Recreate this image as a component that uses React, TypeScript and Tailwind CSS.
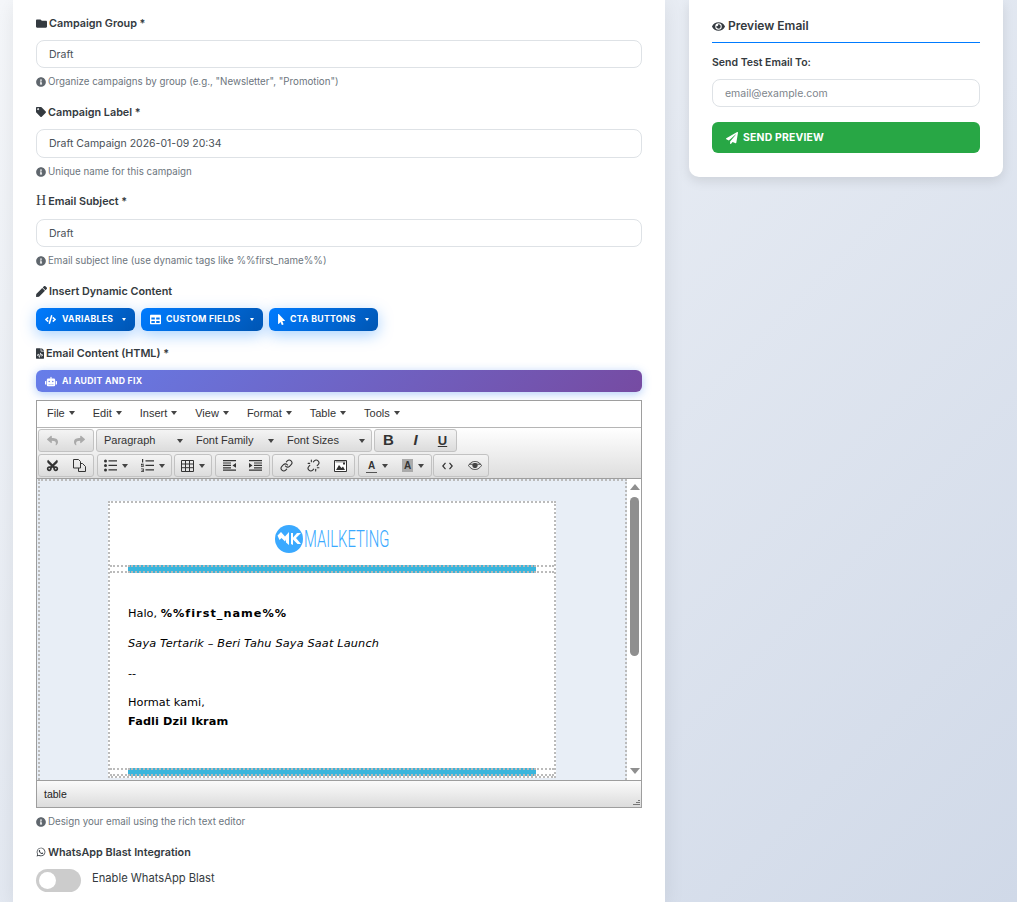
import type { ReactNode } from "react";
import {
  FaCode,
  FaCut,
  FaEye,
  FaFileCode,
  FaFolder,
  FaInfoCircle,
  FaMousePointer,
  FaPaperPlane,
  FaPen,
  FaReply,
  FaRobot,
  FaShare,
  FaTable,
  FaTag,
  FaWhatsapp,
} from "react-icons/fa";
import { Link, Unlink } from "lucide-react";

function Label({ icon, children }: { icon: ReactNode; children: ReactNode }) {
  return (
    <div className="flex h-[14px] items-center gap-[2px] text-[10.8px] leading-[14px] font-semibold text-[#343a40]">
      {icon}
      <span className="pt-[2px]">{children}</span>
    </div>
  );
}

function Help({ children }: { children: ReactNode }) {
  return (
    <div className="flex h-[14px] items-center gap-[2px] text-[9.75px] leading-[14px] text-[#6c757d]">
      <FaInfoCircle className="h-[10px] w-[10px] text-[#5f666d]" />
      <span>{children}</span>
    </div>
  );
}

function TextInput({ value, h }: { value: string; h: string }) {
  return (
    <div className={`flex items-center rounded-lg border border-[#dee2e6] bg-white px-3 pt-[1px] text-[10.5px] text-[#495057] ${h}`}>
      {value}
    </div>
  );
}

function DropButton({ icon, label, w, gap }: { icon: ReactNode; label: string; w: string; gap: string }) {
  return (
    <div className={`flex h-[23px] items-center rounded-md bg-[linear-gradient(135deg,#007bff,#0056b3)] pl-[9px] text-[8.7px] font-bold tracking-[0.3px] text-white shadow-[0_4px_15px_rgba(0,123,255,0.35)] ${w}`}>
      {icon}
      <span className={`flex-1 pt-[1px] ${gap}`}>{label}</span>
      <span className="mr-[9px] h-0 w-0 border-x-[2.5px] border-t-[3px] border-x-transparent border-t-white" />
    </div>
  );
}

function Caret({ className = "" }: { className?: string }) {
  return <span className={`inline-block h-0 w-0 border-x-[3.5px] border-t-[4px] border-x-transparent border-t-[#444] ${className}`} />;
}

function MenuItem({ label }: { label: string }) {
  return (
    <span className="flex items-center gap-[4px]">
      {label}
      <Caret />
    </span>
  );
}

function Group({ w, children, className = "" }: { w: string; children: ReactNode; className?: string }) {
  return (
    <div className={`flex h-[23px] items-center rounded-[3px] border border-[#c2c2c2] bg-[linear-gradient(#f4f4f4,#dcdcdc)] text-[#333] ${w} ${className}`}>
      {children}
    </div>
  );
}

function Tool({ w, children }: { w: string; children: ReactNode }) {
  return <span className={`flex items-center justify-center gap-[5px] ${w}`}>{children}</span>;
}

function SelectBox({ label, w }: { label: string; w: string }) {
  return (
    <span className={`flex items-center justify-between pl-[7px] pr-[6px] text-[11px] ${w}`}>
      {label}
      <Caret />
    </span>
  );
}

// tinymce toolbar icons, the react-icons ones are too heavy at this size
function Bullets() {
  return (
    <svg width="13" height="13" viewBox="0 0 13 13" fill="#333">
      <circle cx="1.5" cy="2" r="1.5" />
      <circle cx="1.5" cy="6.5" r="1.5" />
      <circle cx="1.5" cy="11" r="1.5" />
      <path d="M4.5 1.3h8.5v1.3H4.5zM4.5 5.8h8.5v1.3H4.5zM4.5 10.3h8.5v1.3H4.5z" />
    </svg>
  );
}

function Numbers() {
  return (
    <svg width="13" height="13" viewBox="0 0 13 13" fill="#333">
      <path d="M1 0h1.2v3.6H1zM0 4.8h2.8v.9H1v.6h1.8v1.5H0v-.9h1.8v-.5H0zM0 9.4h2.8V13H0v-.8h1.8v-.6H.6v-.7h1.2v-.6H0z" />
      <path d="M4.5 1.3h8.5v1.3H4.5zM4.5 5.8h8.5v1.3H4.5zM4.5 10.3h8.5v1.3H4.5z" />
    </svg>
  );
}

function Grid() {
  return (
    <svg width="13" height="12" viewBox="0 0 13 12" fill="none" stroke="#333" strokeWidth="1">
      <path d="M.5.5h12v11H.5zM.5 4h12M.5 7.7h12M4.5.5v11M8.5.5v11" />
    </svg>
  );
}

function IndentIcon({ flip }: { flip?: boolean }) {
  return (
    <svg width="13" height="11" viewBox="0 0 13 11" fill="#333" className={flip ? "-scale-x-100" : ""}>
      <path d="M0 0h13v1.2H0zM5 2.4h8v1.2H5zM5 4.8h8V6H5zM5 7.2h8v1.2H5zM0 9.6h13v1.2H0zM0 3l3.5 2.4L0 7.8z" />
    </svg>
  );
}

function CopyIcon() {
  return (
    <svg width="13" height="13" viewBox="0 0 13 13" fill="none" stroke="#333" strokeWidth="1">
      <path d="M.5.5h5l2 2v6.5h-7zM7.5 4.5h2l3 3v5h-7V9" />
    </svg>
  );
}

function ImageIcon() {
  return (
    <svg width="13" height="12" viewBox="0 0 13 12">
      <path d="M.5.5h12v11H.5z" fill="#fff" stroke="#333" />
      <path d="M2 10l3-5 2.5 3 1.5-1.500L11 10zM9 2.500h2v2H9z" fill="#333" />
      <path d="M1.500 1.500h10v.8h-10z" fill="#555" />
    </svg>
  );
}

function CodeIcon() {
  return (
    <svg width="11" height="8" viewBox="0 0 11 8" fill="none" stroke="#333" strokeWidth="1.200">
      <path d="M3.500.8L.8 4l2.700 3.200M7.500.8L10.200 4 7.500 7.200" />
    </svg>
  );
}

function PreviewIcon() {
  return (
    <svg width="14" height="9" viewBox="0 0 14 9" fill="none" stroke="#444" strokeWidth="1">
      <path d="M.5 4.500C3 1 5 .5 7 .5s4 .5 6.500 4C11 8 9 8.500 7 8.500S3 8 .5 4.500zM1 3.200h12" />
      <circle cx="7" cy="4.500" r="2.200" fill="#444" />
    </svg>
  );
}

function BlueBar() {
  return (
    <div className="h-[8px] border-y-2 border-dotted border-[#bbb] px-[18px]">
      <div className="-my-[2px] h-[8px] border-y-2 border-dotted border-[#b8b8b8] bg-[#3ab5dc]" />
    </div>
  );
}

function Logo() {
  return (
    <div className="flex h-[62px] items-center justify-center pt-[10px]">
      <svg width="28" height="28" viewBox="0 0 28 28" className="shrink-0">
        <circle cx="14" cy="14" r="14" fill="#3aa9ff" />
        <path d="M2.500 10.500L6 7l4 4.500L14 7v13l-3-2.500v-3L10 16.500 6.500 13 4.500 15z" fill="#fff" />
        <path d="M16 8h2v4.500l4-4.500h4l-5 5 5 6h-3.500L18 14.500V20l-2-1z" fill="#fff" />
      </svg>
      <span className="ml-[1px] w-[85px] shrink-0 origin-left scale-x-[0.645] whitespace-nowrap font-['Roboto',sans-serif] text-[23px] leading-none font-light text-[#3aa9ff]">
        MAILKETING
      </span>
    </div>
  );
}

function Editor() {
  return (
    <div className="h-[408px] border border-[#9e9e9e] font-['Liberation_Sans',Arial,sans-serif] text-[#333]">
      <div className="flex h-[27px] items-center gap-[18px] border-b border-[#b5b5b5] bg-white pb-[2px] pl-[10px] text-[11px]">
        <MenuItem label="File" />
        <MenuItem label="Edit" />
        <MenuItem label="Insert" />
        <MenuItem label="View" />
        <MenuItem label="Format" />
        <MenuItem label="Table" />
        <MenuItem label="Tools" />
      </div>
      <div className="h-[51px] border-b border-[#9e9e9e] bg-[linear-gradient(#ffffff,#dedede)] pt-[1px] pl-[1px]">
        <div className="flex gap-[2px]">
          <Group w="w-[56px]">
            <Tool w="w-[27px]"><FaReply className="h-[11px] w-[11px] text-[#aaa]" /></Tool>
            <Tool w="w-[27px]"><FaShare className="h-[11px] w-[11px] text-[#aaa]" /></Tool>
          </Group>
          <Group w="w-[276px]">
            <SelectBox label="Paragraph" w="w-[92px]" />
            <SelectBox label="Font Family" w="w-[91px]" />
            <SelectBox label="Font Sizes" w="w-[91px]" />
          </Group>
          <Group w="w-[83px]">
            <Tool w="w-[27px]"><b className="text-[15px]">B</b></Tool>
            <Tool w="w-[27px]"><b className="text-[15px] italic">I</b></Tool>
            <Tool w="w-[27px]"><b className="text-[13px] underline">U</b></Tool>
          </Group>
        </div>
        <div className="mt-[2px] flex gap-[2px]">
          <Group w="w-[56px]">
            <Tool w="w-[27px]"><FaCut className="h-[13px] w-[13px] -rotate-90" /></Tool>
            <Tool w="w-[27px]"><CopyIcon /></Tool>
          </Group>
          <Group w="w-[75px]" className="ml-[1px]">
            <Tool w="w-[37px]"><Bullets /><Caret /></Tool>
            <Tool w="w-[37px]"><Numbers /><Caret /></Tool>
          </Group>
          <Group w="w-[38px]">
            <Tool w="w-[36px]"><Grid /><Caret /></Tool>
          </Group>
          <Group w="w-[55px]" className="ml-[1px]">
            <Tool w="w-[27px]"><IndentIcon flip /></Tool>
            <Tool w="w-[27px]"><IndentIcon /></Tool>
          </Group>
          <Group w="w-[83px]">
            <Tool w="w-[27px]"><Link size={13} strokeWidth={2} /></Tool>
            <Tool w="w-[27px]"><Unlink size={13} strokeWidth={2} /></Tool>
            <Tool w="w-[27px]"><ImageIcon /></Tool>
          </Group>
          <Group w="w-[74px]" className="ml-[1px]">
            <Tool w="w-[37px]"><b className="border-b border-[#555] px-[2px] text-[10px] leading-[13px]">A</b><Caret /></Tool>
            <Tool w="w-[37px]"><b className="bg-[#aaa] px-[2px] text-[10px] leading-[13px]">A</b><Caret /></Tool>
          </Group>
          <Group w="w-[56px]" className="-ml-[1px]">
            <Tool w="w-[27px]"><CodeIcon /></Tool>
            <Tool w="w-[27px]"><PreviewIcon /></Tool>
          </Group>
        </div>
      </div>
      <div className="flex h-[301px] overflow-hidden bg-[#e8eef6]">
        <div className="ml-[1px] h-[312px] w-[589px] border-2 border-dotted border-[#bbb] pt-[20px]">
          <div className="ml-[68px] w-[448px] border-2 border-dotted border-[#bbb] bg-white font-['DejaVu_Sans',Verdana,sans-serif] text-[11.3px] text-black">
            <Logo />
            <BlueBar />
            <div className="h-[195px] pt-[31px] pl-[18px] leading-[19px]">
              <p>
                Halo, <b className="tracking-[1px]">%%first_name%%</b>
              </p>
              <p className="mt-[11px] tracking-[0.15px] italic">Saya Tertarik – Beri Tahu Saya Saat Launch</p>
              <p className="mt-[11px]">--</p>
              <p className="mt-[10px]">Hormat kami,</p>
              <p><b className="tracking-[0.1px]">Fadli Dzil Ikram</b></p>
            </div>
            <BlueBar />
          </div>
        </div>
        <div className="relative flex-1 bg-white">
          <span className="absolute top-[5px] left-[3px] h-0 w-0 border-x-[5px] border-b-[6px] border-x-transparent border-b-[#8f8f8f]" />
          <div className="mt-[18px] ml-[3px] h-[159px] w-[9px] rounded-[5px] bg-[#8f8f8f]" />
          <span className="absolute bottom-[6px] left-[3px] h-0 w-0 border-x-[5px] border-t-[6px] border-x-transparent border-t-[#8f8f8f]" />
        </div>
      </div>
      <div className="relative flex h-[27px] items-center border-t border-[#9e9e9e] bg-[linear-gradient(#fbfbfb,#dcdcdc)] pt-[1px] pl-[7px] text-[10.5px] text-[#222]">
        table
        <svg width="7" height="7" viewBox="0 0 7 7" className="absolute right-[1px] bottom-[2px]">
          <path d="M0 6.500h7M3 4.500h4M5 2.500h2" stroke="#777" strokeWidth="1" fill="none" />
        </svg>
      </div>
    </div>
  );
}

export default function App() {
  return (
    <div className="flex h-[902px] gap-6 overflow-hidden bg-[linear-gradient(135deg,#f5f7fa,#d0d9e8)] pl-[13px] font-['Inter',sans-serif]">
      <main className="h-[902px] w-[652px] bg-white px-[23px] pt-[16px] shadow-[0_4px_20px_rgba(0,0,0,0.08)]">
        <Label icon={<FaFolder className="h-[11px] w-[11px]" />}>Campaign Group *</Label>
        <div className="mt-[10px]"><TextInput value="Draft" h="h-[28px]" /></div>
        <div className="mt-[7px]"><Help>Organize campaigns by group (e.g., "Newsletter", "Promotion")</Help></div>

        <div className="mt-[16px]"><Label icon={<FaTag className="h-[10px] w-[10px]" />}>Campaign Label *</Label></div>
        <div className="mt-[10px]"><TextInput value="Draft Campaign 2026-01-09 20:34" h="h-[29px]" /></div>
        <div className="mt-[7px]"><Help>Unique name for this campaign</Help></div>

        <div className="mt-[15px]">
          <Label icon={<span className="font-['Liberation_Serif',serif] text-[14px] font-normal">H</span>}>Email Subject *</Label>
        </div>
        <div className="mt-[11px]"><TextInput value="Draft" h="h-[28px]" /></div>
        <div className="mt-[7px]"><Help>Email subject line (use dynamic tags like %%first_name%%)</Help></div>

        <div className="mt-[16px]"><Label icon={<FaPen className="h-[11px] w-[11px]" />}>Insert Dynamic Content</Label></div>
        <div className="mt-[10px] flex gap-[6px]">
          <DropButton w="w-[99px]" gap="ml-[6px]" label="VARIABLES" icon={<FaCode className="h-[11px] w-[11px]" />} />
          <DropButton w="w-[122px]" gap="ml-[5px]" label="CUSTOM FIELDS" icon={<FaTable className="h-[11px] w-[11px]" />} />
          <DropButton w="w-[109px]" gap="ml-[5px]" label="CTA BUTTONS" icon={<FaMousePointer className="h-[11px] w-[7px]" />} />
        </div>

        <div className="mt-[15px]"><Label icon={<FaFileCode className="h-[11px] w-[8px]" />}>Email Content (HTML) *</Label></div>
        <div className="mt-[10px] flex h-[22px] items-center rounded-md bg-[linear-gradient(135deg,#667eea,#764ba2)] pl-[9px] text-[8.7px] font-bold tracking-[0.3px] text-white shadow-[0_2px_10px_rgba(60,130,240,0.4)]">
          <FaRobot className="h-[11px] w-[12px]" />
          <span className="ml-[5px] pt-[1px]">AI AUDIT AND FIX</span>
        </div>
        <div className="mt-[8px]"><Editor /></div>
        <div className="mt-[7px]"><Help>Design your email using the rich text editor</Help></div>

        <div className="mt-[16px]">
          <Label icon={<FaWhatsapp className="h-[10px] w-[10px]" />}>WhatsApp Blast Integration</Label>
        </div>
        <div className="mt-[10px] flex items-start">
          <div className="flex h-[23px] w-[45px] items-center rounded-full bg-[#cccccc] pl-[3px]">
            <span className="h-[17px] w-[17px] rounded-full bg-white" />
          </div>
          <span className="mt-[2px] ml-[11px] text-[11.2px] leading-[14px] text-[#343a40]">Enable WhatsApp Blast</span>
        </div>
      </main>
      <aside className="h-[177px] w-[314px] rounded-b-[10px] bg-white px-[23px] pt-[19px] shadow-[0_4px_12px_rgba(0,0,0,0.1)]">
        <div className="flex h-[24px] items-start gap-[3px] border-b border-[#007bff] text-[12px] leading-[14px] font-semibold text-[#343a40]">
          <FaEye className="mt-[1px] h-[13px] w-[13px]" />
          <span>Preview Email</span>
        </div>
        <div className="mt-[13px] text-[10.5px] leading-[14px] font-semibold text-[#343a40]">Send Test Email To:</div>
        <div className="mt-[9px] flex h-[28px] items-center rounded-lg border border-[#dee2e6] px-3 pt-[1px] text-[10.5px] text-[#7d848b]">
          email@example.com
        </div>
        <div className="mt-[15px] flex h-[31px] items-center rounded-md bg-[#28a745] pl-[14px] text-[10.4px] font-bold tracking-[0.2px] text-white">
          <FaPaperPlane className="h-[12px] w-[12px]" />
          <span className="ml-[5px]">SEND PREVIEW</span>
        </div>
      </aside>
    </div>
  );
}
